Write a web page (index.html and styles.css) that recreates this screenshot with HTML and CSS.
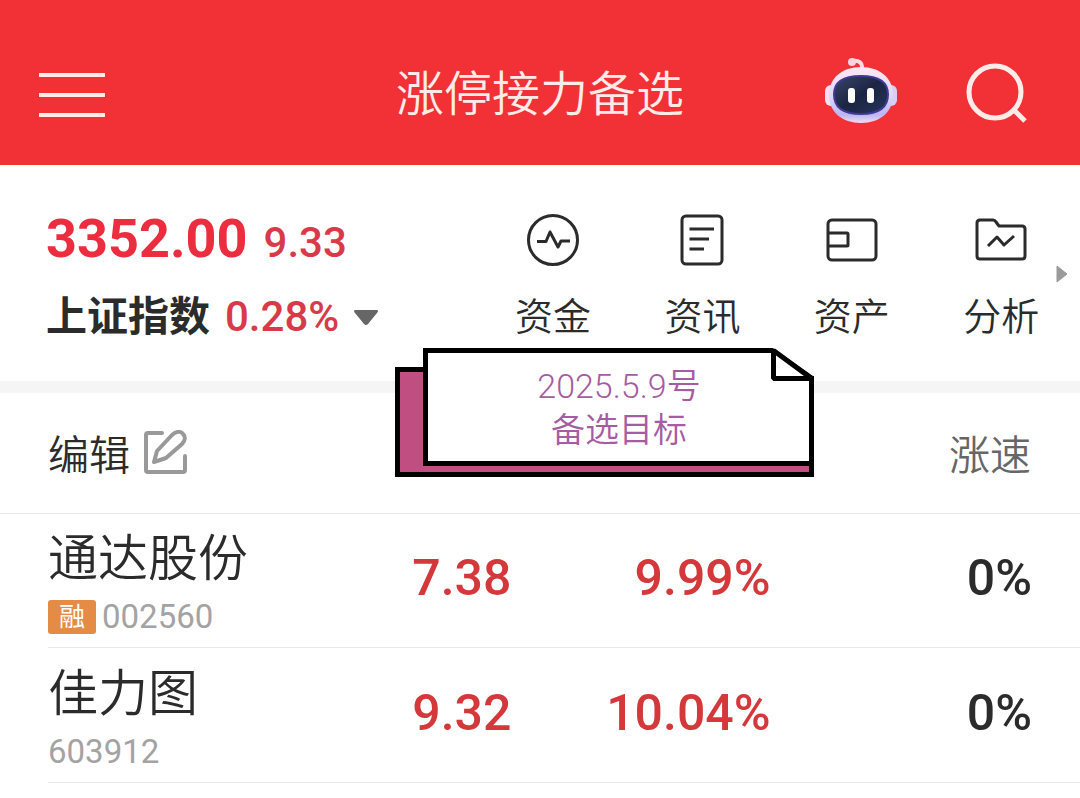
FILE: index.html
```html
<!DOCTYPE html>
<html lang="zh-CN">
<head>
<meta charset="utf-8">
<meta name="viewport" content="width=device-width, initial-scale=1">
<title>涨停接力备选</title>
<link rel="stylesheet" href="styles.css">
</head>
<body>
<header class="topbar">
  <button class="icon-btn" type="button" aria-label="菜单">
    <svg width="66" height="46" viewBox="0 0 66 46" fill="none" stroke="#ffebe8" stroke-width="4"><path d="M0 3h66M0 23h66M0 43h66"/></svg>
  </button>
  <h1 class="title">涨停接力备选</h1>
  <div class="actions">
    <button class="icon-btn" type="button" aria-label="智能助手">
      <svg width="72" height="76" viewBox="0 7 72 76">
        <defs>
          <linearGradient id="shell" x1="0" y1="0" x2="0" y2="1"><stop offset="0" stop-color="#ffe9f2"/><stop offset=".55" stop-color="#dcd5fa"/><stop offset=".85" stop-color="#b9b6f4"/><stop offset="1" stop-color="#f3dcee"/></linearGradient>
          <linearGradient id="visor" x1="0" y1="0" x2="1" y2="1"><stop offset="0" stop-color="#3a4468"/><stop offset=".5" stop-color="#1b2543"/><stop offset="1" stop-color="#27345c"/></linearGradient>
        </defs>
        <path d="M28 11C33 10 38 12 37 20" fill="none" stroke="#ffdbe4" stroke-width="4"/>
        <circle cx="27" cy="12" r="4" fill="#ffd3de"/>
        <rect x="0" y="35" width="12" height="21" rx="6" fill="#f5dff0"/>
        <rect x="60" y="35" width="12" height="21" rx="6" fill="#d9cff5"/>
        <path d="M36 17C55 17 68 28 68 45C68 62 55 73 36 73S4 62 4 45C4 28 17 17 36 17Z" fill="url(#shell)"/>
        <path d="M36 26C54 26 63 32 63 44.500S54 64 36 64S9 57 9 44.500S18 26 36 26Z" fill="url(#visor)" stroke="#403a91" stroke-width="2"/>
        <rect x="23" y="38" width="7" height="15" rx="3" fill="#fff"/>
        <rect x="42" y="38" width="7" height="15" rx="3" fill="#fff"/>
      </svg>
    </button>
    <button class="icon-btn" type="button" aria-label="搜索">
      <svg width="62" height="64" viewBox="0 0 62 64" fill="none" stroke="#ffebe8" stroke-width="5"><circle cx="29" cy="29" r="26"/><path d="M48 47L59 58"/></svg>
    </button>
  </div>
</header>

<section class="summary">
  <div class="index">
    <div class="index-main"><strong class="index-value">3352.00</strong><span class="index-change">9.33</span></div>
    <button class="index-picker" type="button">
      <span class="index-name">上证指数</span><span class="index-change">0.28%</span>
      <svg width="24" height="15" viewBox="0 0 24 15"><path d="M1 0H23Q25 1 23 3L14 14Q12 16 10 14L1 3Q-1 1 1 0Z" fill="#666"/></svg>
    </button>
  </div>
  <nav class="tools">
    <a class="tool" href="#funds">
      <svg width="54" height="54" viewBox="0 0 54 54" class="line"><circle cx="27" cy="27" r="24.500"/><path d="M11 28.500h9L24 19l8 15 3-6h9"/></svg>
      资金</a>
    <a class="tool" href="#news">
      <svg width="54" height="54" viewBox="0 0 54 54" class="line"><rect x="7" y="3" width="40" height="48" rx="4"/><path d="M14.500 16H39M14.500 26H34M14.500 36H29"/></svg>
      资讯</a>
    <a class="tool" href="#assets">
      <svg width="54" height="54" viewBox="0 0 54 54" class="line"><rect x="3" y="7" width="48" height="40" rx="4"/><path d="M3 20h19q1 0 1 1v11q0 1-1 1H3"/></svg>
      资产</a>
    <a class="tool" href="#analysis">
      <svg width="54" height="54" viewBox="0 0 54 54" class="line"><path d="M6 7H19Q21 7 22 9L25 13H48Q51 13 51 16V43Q51 46 48 46H6Q3 46 3 43V10Q3 7 6 7Z"/><path d="M14 33L23 24L30 32L40 23"/></svg>
      分析</a>
  </nav>
  <svg class="more" width="12" height="18" viewBox="0 0 12 18"><path d="M1 1L11 9L1 17Z" fill="#999" stroke="#999" stroke-linejoin="round"/></svg>
</section>

<main class="list">
  <table class="stocks">
    <colgroup><col class="col-name"><col class="col-price"><col class="col-rate"><col class="col-speed"></colgroup>
    <thead>
      <tr>
        <th><button class="edit" type="button">编辑
          <svg width="44" height="44" viewBox="0 0 44 44" fill="none" stroke="#999" stroke-width="4" stroke-linecap="round" stroke-linejoin="round"><path d="M18 3H4Q2 3 2 5V40Q2 42 4 42H39Q41 42 41 40V26"/><path d="M10 32L13 21L28 5C32 1 37 1 39 4C42 7 41 11 38 14L22 28Z"/></svg>
        </button></th>
        <th></th><th></th>
        <th class="speed-head">涨速</th>
      </tr>
    </thead>
    <tbody>
      <tr>
        <td><div class="name">通达股份</div><div class="code"><span class="tag">融</span>002560</div></td>
        <td class="num up">7.38</td><td class="num up">9.99%</td><td class="num">0%</td>
      </tr>
      <tr>
        <td><div class="name">佳力图</div><div class="code">603912</div></td>
        <td class="num up">9.32</td><td class="num up">10.04%</td><td class="num">0%</td>
      </tr>
    </tbody>
  </table>
</main>

<aside class="note">
  <svg class="note-frame" width="419" height="129" viewBox="0 0 419 129" stroke="#000" stroke-width="5">
    <path d="M2.500 21.500H60V60H416.500V126.500H2.500Z" fill="#c04e80"/>
    <path d="M30.500 2.500H377L416.500 30V115.500H30.500Z" fill="#fff"/>
    <path d="M378.500 2.500V30.500H416.500Z" fill="#fff" stroke-linejoin="bevel"/>
    <path d="M416.500 28V129" fill="none"/>
  </svg>
  <div class="note-text"><span>2025.5.9号</span><span>备选目标</span></div>
</aside>
</body>
</html>
```
FILE: styles.css
```css
* { box-sizing: border-box; }

body {
  position: relative;
  margin: 0;
  background: #fff;
  color: #2b2b2b;
  font-family: Roboto, "Noto Sans CJK SC", sans-serif;
}

svg { display: block; flex: none; }

button {
  padding: 0;
  border: 0;
  background: none;
  color: inherit;
  font: inherit;
  cursor: pointer;
}

.topbar {
  display: grid;
  grid-template-columns: 1fr auto 1fr;
  align-items: center;
  min-height: 165px;
  padding: 24px 52px 0;
  background: #f13136;
}

.icon-btn { justify-self: start; }

.topbar > .icon-btn { margin-left: -13px; }

.title {
  margin: 0;
  color: #ffebe8;
  font-size: 48px;
  font-weight: 350;
  line-height: 72px;
}

.actions {
  display: flex;
  align-items: center;
  justify-content: flex-end;
  gap: 69px;
}

.summary {
  position: relative;
  display: grid;
  grid-template-columns: 4fr 5fr;
  padding: 40px 4px 32px 0;
  border-bottom: 12px solid #f5f5f5;
}

.index { padding-left: 46px; }

.index-main {
  display: flex;
  align-items: baseline;
  gap: 16px;
  line-height: 68px;
}

.index-value {
  color: #ec2c3f;
  font-size: 54px;
  font-weight: 700;
}

.index-change {
  color: #d93a49;
  font-size: 42px;
  font-weight: 500;
}

.index-picker {
  display: flex;
  align-items: center;
  gap: 15px;
  margin-top: 8px;
  line-height: 64px;
}

.index-name {
  font-size: 41px;
  font-weight: 700;
}

.tools {
  display: grid;
  grid-template-columns: repeat(4, 1fr);
}

.tool {
  display: flex;
  flex-direction: column;
  align-items: center;
  gap: 22px;
  padding-top: 8px;
  color: inherit;
  font-size: 38px;
  font-weight: 350;
  line-height: 56px;
  text-decoration: none;
}

.line {
  fill: none;
  stroke: #2b2b2b;
  stroke-width: 3;
  stroke-linejoin: round;
}

.more {
  position: absolute;
  top: 100px;
  right: 12px;
}

.stocks {
  width: 100%;
  table-layout: fixed;
  border-collapse: collapse;
}

.col-name { width: 30%; }
.col-price { width: 18%; }
.col-rate { width: 24%; }
.col-speed { width: 28%; }

.stocks th {
  height: 120px;
  padding: 0 0 2px;
  border-bottom: 1px solid #e8e8e8;
  font-size: 41px;
  font-weight: 350;
  text-align: left;
}

.stocks th:first-child,
.stocks td:first-child { padding-left: 48px; }

.edit {
  display: flex;
  align-items: center;
  gap: 14px;
}

.stocks .speed-head {
  padding-right: 49px;
  color: #666;
  text-align: right;
}

.stocks td {
  height: 135px;
  padding: 0;
  background: linear-gradient(#e8e8e8, #e8e8e8) 0 100% / 100% 1px no-repeat;
}

.stocks td:first-child { background-position: 48px 100%; }

.name {
  font-size: 50px;
  font-weight: 350;
  line-height: 72px;
  white-space: nowrap;
}

.code {
  display: flex;
  align-items: center;
  gap: 6px;
  color: #a3a3a3;
  font-size: 33px;
  line-height: 44px;
}

.tag {
  width: 48px;
  border-radius: 3px;
  background: #e48c46;
  color: #fff;
  font-size: 26px;
  line-height: 34px;
  text-align: center;
}

.stocks .num {
  padding: 0 7px 6px 0;
  font-size: 50px;
  font-weight: 500;
  text-align: right;
}

.stocks .num:last-child { padding-right: 48px; }

.stocks .up { color: #d4383b; }

.note {
  position: absolute;
  top: 348px;
  left: 395px;
  width: 419px;
}

.note-text {
  position: absolute;
  inset: 16px 3px auto 32px;
  display: grid;
  justify-items: center;
  color: #a55ca2;
  font-size: 34px;
  font-weight: 350;
  line-height: 44px;
}
```
